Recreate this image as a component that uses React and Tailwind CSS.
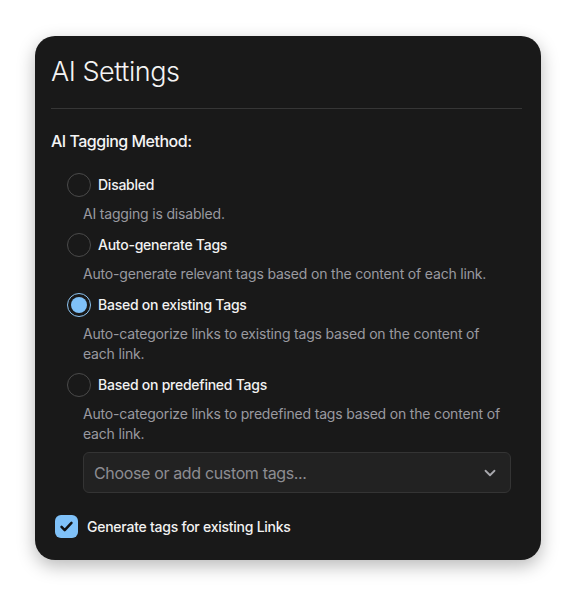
import React from "react";

function Radio({ checked }) {
  return (
    <span className={"flex h-6 w-6 shrink-0 items-center justify-center rounded-full border " + (checked ? "border-[#8ec5f2]" : "border-[#4a4a4a]")}>
      {checked && <span className="h-[16px] w-[16px] rounded-full bg-[#7fc1f8]" />}
    </span>
  );
}

function Option({ label, desc, checked }) {
  return (
    <div className="flex flex-col">
      <div className="flex h-6 items-center gap-[7px]">
        <Radio checked={checked} />
        <span className="-mt-px text-[14px] font-medium tracking-[-0.25px] text-[#f2f2f2]">{label}</span>
      </div>
      <p className="mt-[7px] pl-4 pr-6 text-[14px] leading-[20px] tracking-[-0.18px] text-[#9a9aa0]">{desc}</p>
    </div>
  );
}

export default function App() {
  return (
    <div className="min-h-[596px] w-[575px] bg-white pt-9 pl-[35px]" style={{ fontFamily: "Inter, 'Noto Sans', sans-serif" }}>
      <div className="w-[506px] rounded-[20px] bg-[#191919] px-4 pt-[16px] pb-[22px] shadow-[0_6px_18px_rgba(0,0,0,0.28)]">
        <h1 className="text-[27px] font-light leading-[40px] tracking-[-0.45px] text-[#f4f4f4]">AI Settings</h1>
        <div className="mt-[16px] mr-[3px] h-px bg-[#363636]" />
        <h2 className="mt-[20px] text-[16px] font-medium leading-[24px] tracking-[-0.5px] text-[#f4f4f4]">AI Tagging Method:</h2>
        <div className="mt-[20px] flex flex-col gap-[9px] pl-4">
          <Option label="Disabled" desc="AI tagging is disabled." />
          <Option label="Auto-generate Tags" desc="Auto-generate relevant tags based on the content of each link." />
          <Option checked label="Based on existing Tags" desc="Auto-categorize links to existing tags based on the content of each link." />
          <Option label="Based on predefined Tags" desc="Auto-categorize links to predefined tags based on the content of each link." />
        </div>
        <div className="mt-[8px] ml-[32px] mr-[14px] flex h-[41px] items-center justify-between rounded-[6px] border border-[#343434] bg-[#222222] pl-[10px] pr-[11px]">
          <span className="text-[16px] tracking-[-0.35px] text-[#8d8d92]">Choose or add custom tags...</span>
          <svg width="18" height="18" viewBox="0 0 24 24" fill="none" stroke="#a8a8ad" strokeWidth="2.4" strokeLinecap="round" strokeLinejoin="round">
            <path d="M6 9l6 6 6-6" />
          </svg>
        </div>
        <div className="mt-[22px] ml-[4px] flex items-center gap-[9px]">
          <span className="flex h-[23px] w-[23px] items-center justify-center rounded-[6px] bg-[#7fc1f8]">
            <svg width="17" height="17" viewBox="0 0 24 24" fill="none" stroke="#111" strokeWidth="3.6" strokeLinecap="round" strokeLinejoin="round">
              <path d="M5 12.5l4.5 4.5L19 7" />
            </svg>
          </span>
          <span className="text-[14px] font-medium tracking-[-0.25px] text-[#f2f2f2]">Generate tags for existing Links</span>
        </div>
      </div>
    </div>
  );
}
